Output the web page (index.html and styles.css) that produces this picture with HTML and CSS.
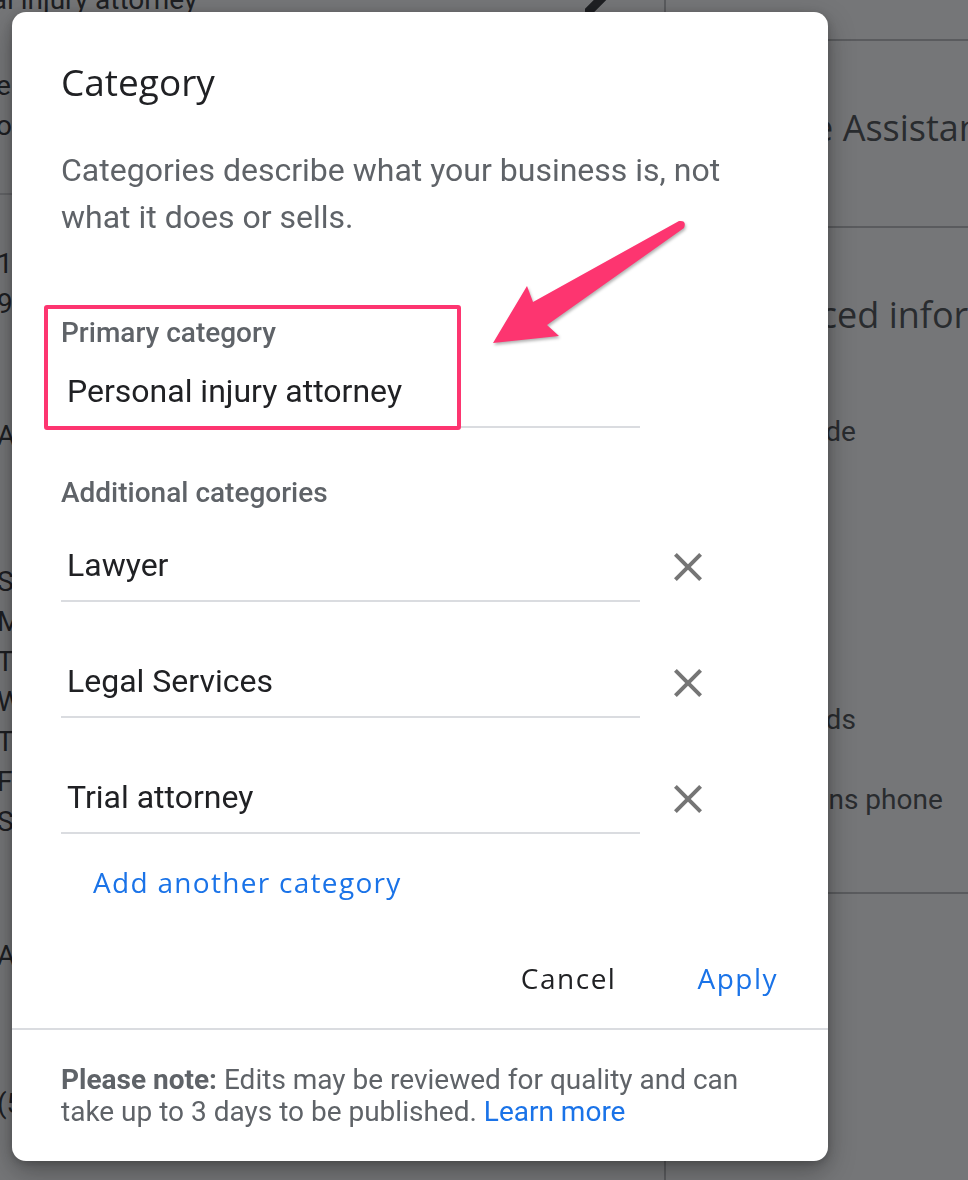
FILE: index.html
```html
<!DOCTYPE html>
<html lang="en">
<head>
<meta charset="utf-8">
<title>Category</title>
<link rel="stylesheet" href="styles.css">
</head>
<body>
<div class="page">
  <div class="main">
    <div class="top-row">
      <span class="top-text">Personal injury attorney</span>
      <svg class="pencil" viewBox="0 0 24 24" width="40" height="40"><path d="M3 17.25V21h3.75L17.81 9.94l-3.75-3.75L3 17.25zM20.71 7.04a1 1 0 0 0 0-1.41l-2.34-2.34a1 1 0 0 0-1.41 0l-1.83 1.83 3.75 3.75 1.83-1.83z" fill="#202124"/></svg>
    </div>
    <div class="bg-block bg-first">
      <div>erving area</div>
      <div>open with main hours</div>
    </div>
    <div class="bg-block bg-addr">
      <div>1600 Main Street</div>
      <div>94043</div>
    </div>
    <div class="bg-block bg-a1">Add hours</div>
    <div class="bg-block bg-days">
      <div>Sunday</div><div>Monday</div><div>Tuesday</div><div>Wednesday</div><div>Thursday</div><div>Friday</div><div>Saturday</div>
    </div>
    <div class="bg-block bg-a2">Add special hours</div>
    <div class="bg-block bg-phone">(555) 010-0100</div>
  </div>
  <div class="side">
    <div class="side-sec side-top"></div>
    <div class="side-sec side-assist"><div class="side-title">Google Assistant</div></div>
    <div class="side-sec side-adv">
      <div class="side-title">Advanced information</div>
      <div class="side-item item-code">Store code</div>
      <div class="side-item item-ads">Google Ads</div>
      <div class="side-item item-phone">Extensions phone</div>
    </div>
  </div>
</div>

<div class="scrim">
  <div class="dialog">
    <div class="dialog-content">
      <h2 class="title">Category</h2>
      <p class="desc">Categories describe what your business is, not what it does or sells.</p>
      <div class="field primary">
        <div class="label">Primary category</div>
        <div class="input">Personal injury attorney</div>
        <div class="highlight"></div>
      </div>
      <div class="label additional">Additional categories</div>
      <div class="row">
        <div class="input">Lawyer</div>
        <button class="remove" aria-label="Remove"><svg viewBox="0 0 24 24" width="48" height="48"><path d="M19 6.41L17.59 5 12 10.59 6.41 5 5 6.41 10.59 12 5 17.59 6.41 19 12 13.41 17.59 19 19 17.59 13.41 12z"/></svg></button>
      </div>
      <div class="row">
        <div class="input">Legal Services</div>
        <button class="remove" aria-label="Remove"><svg viewBox="0 0 24 24" width="48" height="48"><path d="M19 6.41L17.59 5 12 10.59 6.41 5 5 6.41 10.59 12 5 17.59 6.41 19 12 13.41 17.59 19 19 17.59 13.41 12z"/></svg></button>
      </div>
      <div class="row">
        <div class="input">Trial attorney</div>
        <button class="remove" aria-label="Remove"><svg viewBox="0 0 24 24" width="48" height="48"><path d="M19 6.41L17.59 5 12 10.59 6.41 5 5 6.41 10.59 12 5 17.59 6.41 19 12 13.41 17.59 19 19 17.59 13.41 12z"/></svg></button>
      </div>
      <button class="add">Add another category</button>
      <div class="actions">
        <button class="btn cancel">Cancel</button>
        <button class="btn apply">Apply</button>
      </div>
    </div>
    <div class="note"><b>Please note:</b> Edits may be reviewed for quality and can<br>take up to 3 days to be published. <a href="#">Learn more</a></div>
    <svg class="arrow" viewBox="0 0 220 150" width="220" height="150"><path d="M201 11 Q209 10 206 18 L69 115 L81 126 L15 133 L49 76 L55 92 Z" fill="#fd3570"/></svg>
  </div>
</div>
</body>
</html>
```

FILE: styles.css
```css
* { box-sizing: border-box; }
html, body { margin: 0; padding: 0; }
body {
  font-family: Roboto, "Liberation Sans", sans-serif;
  color: #202124;
  width: 968px;
  height: 1180px;
  overflow: hidden;
  background: #fff;
}

/* background page */
.page {
  display: flex;
  height: 1180px;
  overflow: hidden;
}
.main {
  width: 666px;
  flex: none;
  border-right: 2px solid #b9babc;
  font-size: 28px;
  line-height: 40px;
  white-space: nowrap;
  overflow: hidden;
}
.top-row {
  display: flex;
  align-items: center;
  height: 40px;
  margin-top: -20px;
  margin-left: -96px;
  font-size: 28px;
}
.top-text { width: 676px; flex: none; }
.pencil { flex: none; }
.bg-block { margin-left: -3px; }
.bg-first { margin-top: 46px; padding-bottom: 47px; border-bottom: 2px solid #d0d1d3; margin-left: -4px; }
.bg-addr { margin-top: 49px; }
.bg-a1 { margin-top: 92px; }
.bg-days { margin-top: 106px; }
.bg-a2 { margin-top: 94px; }
.bg-phone { margin-top: 108px; }

.side {
  flex: 1;
  display: flex;
  flex-direction: column;
  padding-left: 56px;
  color: #3c4043;
  white-space: nowrap;
  overflow: hidden;
}
.side-sec { border-bottom: 2px solid #b9babc; margin-left: -56px; padding-left: 56px; }
.side-top { height: 41px; }
.side-assist { height: 187px; padding-top: 63px; }
.side-adv { height: 666px; padding-top: 63px; }
.side-title {
  font-family: "Open Sans", Roboto, sans-serif;
  font-size: 36px;
  line-height: 48px;
  margin-left: -7px;
}
.side-item { font-size: 28px; line-height: 40px; }
.item-code { margin-top: 73px; }
.item-ads { margin-top: 248px; margin-left: -10px; }
.item-phone { margin-top: 40px; }

/* overlay + dialog */
.scrim {
  position: fixed;
  inset: 0;
  background: rgba(30, 31, 34, 0.61);
  padding: 12px;
}
.dialog {
  position: relative;
  width: 816px;
  background: #fff;
  border-radius: 14px;
  box-shadow: 0 10px 28px rgba(0, 0, 0, 0.32), 0 2px 8px rgba(0, 0, 0, 0.2);
}
.dialog-content {
  padding: 48px 50px 32px 49px;
  display: flex;
  flex-direction: column;
  align-items: flex-start;
}
.title {
  margin: 0;
  font-family: "Open Sans", Roboto, sans-serif;
  font-weight: 400;
  font-size: 37px;
  line-height: 44px;
  color: #202124;
}
.desc {
  margin: 43px 0 0;
  font-size: 32px;
  line-height: 47px;
  color: #5f6368;
}
.field { position: relative; }
.primary { margin-top: 76px; }
.label {
  font-size: 28px;
  line-height: 32px;
  font-weight: 500;
  color: #5f6368;
}
.input {
  width: 579px;
  font-size: 32px;
  line-height: 40px;
  color: #202124;
  padding-left: 6px;
  border-bottom: 2px solid #dadce0;
}
.primary .input { margin-top: 22px; padding-bottom: 15px; }
.highlight {
  position: absolute;
  left: -17px;
  top: -12px;
  width: 417px;
  height: 125px;
  border: 4px solid #fd3570;
  border-radius: 3px;
}
.additional { margin-top: 49px; }
.row {
  display: flex;
  align-items: flex-start;
  margin-top: 59px;
}
.additional + .row { margin-top: 36px; }
.row .input { padding-bottom: 15px; }
.remove {
  background: none;
  border: 0;
  padding: 0;
  margin: -2px 0 0 24px;
  width: 48px;
  height: 48px;
  fill: #757575;
  display: flex;
}
.add, .btn {
  background: none;
  border: 0;
  padding: 0;
  font-family: "Open Sans", Roboto, sans-serif;
  font-weight: 500;
  font-size: 28px;
  line-height: 36px;
  letter-spacing: 1.5px;
  cursor: pointer;
}
.add {
  margin: 30px 0 0 32px;
  color: #1a73e8;
  letter-spacing: 1.3px;
}
.actions {
  margin-top: 60px;
  align-self: stretch;
  display: flex;
  justify-content: flex-end;
  gap: 81px;
}
.cancel { color: #202124; }
.apply { color: #1a73e8; }
.note {
  border-top: 2px solid #dadce0;
  padding: 34px 49px 33px;
  font-size: 28px;
  line-height: 32px;
  color: #5f6368;
}
.note b { font-weight: 700; }
.note a { color: #1a73e8; text-decoration: none; }
.arrow {
  position: absolute;
  left: 466px;
  top: 198px;
  filter: drop-shadow(1px 2px 1.5px rgba(0, 0, 0, 0.3));
}
```
